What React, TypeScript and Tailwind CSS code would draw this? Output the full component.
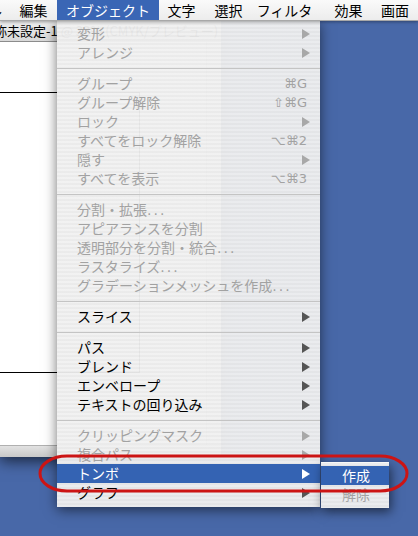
import React from 'react';

type Item =
  | 'sep'
  | { t: React.ReactNode; d?: boolean; arrow?: boolean; sc?: string; hl?: boolean };

const Dots = () => (
  <span className="font-['DejaVu_Sans',sans-serif] tracking-[2px]">...</span>
);

const items: Item[] = [
  { t: '変形', d: true, arrow: true },
  { t: 'アレンジ', d: true, arrow: true },
  'sep',
  { t: 'グループ', d: true, sc: '⌘G' },
  { t: 'グループ解除', d: true, sc: '⇧⌘G' },
  { t: 'ロック', d: true, arrow: true },
  { t: 'すべてをロック解除', d: true, sc: '⌥⌘2' },
  { t: '隠す', d: true, arrow: true },
  { t: 'すべてを表示', d: true, sc: '⌥⌘3' },
  'sep',
  { t: <>分割・拡張<Dots /></>, d: true },
  { t: 'アピアランスを分割', d: true },
  { t: <>透明部分を分割・統合<Dots /></>, d: true },
  { t: <>ラスタライズ<Dots /></>, d: true },
  { t: <>グラデーションメッシュを作成<Dots /></>, d: true },
  'sep',
  { t: 'スライス', arrow: true },
  'sep',
  { t: 'パス', arrow: true },
  { t: 'ブレンド', arrow: true },
  { t: 'エンベロープ', arrow: true },
  { t: 'テキストの回り込み', arrow: true },
  'sep',
  { t: 'クリッピングマスク', d: true, arrow: true },
  { t: '複合パス', d: true, arrow: true },
  { t: 'トンボ', arrow: true, hl: true },
  { t: 'グラフ', arrow: true },
];

const Arrow = ({ cls }: { cls: string }) => (
  <svg width="8" height="10" viewBox="0 0 8 10" className={cls}>
    <path d="M0 0 L8 5 L0 10 Z" />
  </svg>
);

const stripes =
  "bg-[repeating-linear-gradient(to_bottom,rgba(241,241,241,0.96)_0px,rgba(241,241,241,0.96)_2px,rgba(234,234,234,0.96)_2px,rgba(234,234,234,0.96)_4px)]";

export default function App() {
  return (
    <div className="relative h-[536px] w-[418px] overflow-hidden bg-[#4868a8] font-['Noto_Sans_CJK_JP',sans-serif]">
      {/* menu bar */}
      <div className="relative z-30 flex h-[21px] items-stretch border-b border-[#a8a8a8] bg-[linear-gradient(to_bottom,#fafafa,#ececec)] text-[14px] leading-[20px] text-black shadow-[0_1px_3px_rgba(0,0,0,0.35)]">
        <div className="flex w-[10px] justify-end overflow-hidden">
          <span className="mr-[8px] whitespace-nowrap">ファイル</span>
        </div>
        <div className="w-[47px] whitespace-nowrap text-center">編集</div>
        <div className="w-[102px] whitespace-nowrap bg-[#3a66b5] text-center text-white">オブジェクト</div>
        <div className="w-[45px] whitespace-nowrap text-center">文字</div>
        <div className="w-[49px] whitespace-nowrap text-center">選択</div>
        <div className="w-[63px] whitespace-nowrap text-center">フィルタ</div>
        <div className="w-[65px] whitespace-nowrap text-center">効果</div>
        <div className="w-[28px] whitespace-nowrap text-center">画面</div>
      </div>

      {/* document window */}
      <div className="absolute left-0 top-[21px] z-10 flex h-[436px] w-[221px] flex-col bg-white shadow-[0_4px_14px_rgba(0,0,0,0.65)]">
        <div className="flex h-[21px] items-center overflow-hidden border-b border-[#8c8c8c] bg-[linear-gradient(to_bottom,#eeeeee,#d8d8d8)]">
          <span className="ml-[-19px] whitespace-nowrap text-[13px] text-black">名称未設定-1 @ 33% (CMYK/プレビュー)</span>
        </div>
        <div className="relative flex flex-1">
          <div className="relative flex-1">
            <div className="absolute left-[-10px] top-[50px] h-[281px] w-[150px] border border-black" />
          </div>
          <div className="w-[15px] border-l border-[#c8c8c8] bg-[#f6f6f6]" />
        </div>
        <div className="h-[12px] border-t border-[#b0b0b0] bg-[linear-gradient(to_bottom,#e2e2e2,#c8c8c8)]" />
      </div>

      {/* Object menu */}
      <div className={`absolute left-[57px] top-[21px] z-20 w-[263px] pb-[5px] pt-[3px] text-[14px] shadow-[0_3px_12px_rgba(0,0,0,0.55)] ${stripes}`}>
        {items.map((it, i) =>
          it === 'sep' ? (
            <div key={i} className="flex h-[12px] items-center">
              <div className="h-px w-full bg-[#c4c4c4]" />
            </div>
          ) : (
            <div
              key={i}
              className={`flex h-[19px] items-center pl-[20px] leading-[19px] ${
                it.hl ? 'bg-[#3463b3] text-white' : it.d ? 'text-[#a2a2a2]' : 'text-black'
              }`}
            >
              <span className="flex-1 whitespace-nowrap">{it.t}</span>
              {it.sc && (
                <span className="pr-[13px] font-['DejaVu_Sans',sans-serif] text-[13px]">{it.sc}</span>
              )}
              {it.arrow && (
                <span className="flex pr-[10px]">
                  <Arrow cls={it.hl ? 'fill-white' : it.d ? 'fill-[#a8a8a8]' : 'fill-[#555555]'} />
                </span>
              )}
            </div>
          )
        )}
      </div>

      {/* submenu */}
      <div className={`absolute left-[321px] top-[462px] z-20 w-[68px] border-t border-[#f8f8f8] pb-[4px] pt-[3px] text-[14px] leading-[19px] shadow-[2px_4px_10px_rgba(0,0,0,0.55)] ${stripes}`}>
        <div className="h-[19px] bg-[#3463b3] pl-[21px] text-white">作成</div>
        <div className="h-[19px] pl-[21px] text-[#a2a2a2]">解除</div>
      </div>

      {/* red annotation */}
      <svg className="pointer-events-none absolute left-0 top-0 z-40" width="418" height="536">
        <rect x="40" y="456" width="367" height="35" rx="27" ry="17.5" fill="none" stroke="#cc1414" strokeWidth="3" />
      </svg>
    </div>
  );
}
